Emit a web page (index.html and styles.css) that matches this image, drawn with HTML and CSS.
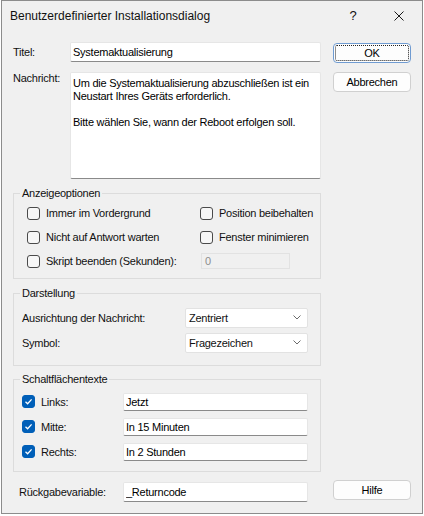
FILE: index.html
```html
<!DOCTYPE html>
<html lang="de">
<head>
    <meta charset="UTF-8">
    <title>Benutzerdefinierter Installationsdialog</title>
    <link rel="stylesheet" href="styles.css">
</head>
<body>

<div class="window">
    <div class="titlebar">
        <span class="title">Benutzerdefinierter Installationsdialog</span>
        <div class="caption-buttons">
            <span class="caption-btn">?</span>
            <span class="caption-btn">
                <svg width="10" height="10" viewBox="0 0 10 10">
                    <path d="M0.5 0.5 L9.5 9.5 M9.5 0.5 L0.5 9.5" stroke="#1a1a1a" stroke-width="1" fill="none"/>
                </svg>
            </span>
        </div>
    </div>

    <div class="dialog-body">
        <div class="main">
            <div class="field-row">
                <label class="field-label" for="titel">Titel:</label>
                <input class="textbox" id="titel" type="text" value="Systemaktualisierung">
            </div>

            <div class="field-row message-row">
                <label class="field-label" for="nachricht">Nachricht:</label>
                <textarea class="textbox message" id="nachricht" wrap="off">Um die Systemaktualisierung abzuschließen ist ein
Neustart Ihres Geräts erforderlich.

Bitte wählen Sie, wann der Reboot erfolgen soll.</textarea>
            </div>

            <fieldset class="group">
                <legend>Anzeigeoptionen</legend>
                <div class="options">
                    <label class="check"><span class="box"></span>Immer im Vordergrund</label>
                    <label class="check"><span class="box"></span>Position beibehalten</label>
                    <label class="check"><span class="box"></span>Nicht auf Antwort warten</label>
                    <label class="check"><span class="box"></span>Fenster minimieren</label>
                    <label class="check"><span class="box"></span>Skript beenden (Sekunden):</label>
                    <div class="spinbox">0</div>
                </div>
            </fieldset>

            <fieldset class="group appearance">
                <legend>Darstellung</legend>
                <div class="appearance-grid">
                    <span>Ausrichtung der Nachricht:</span>
                    <div class="combo">
                        <span>Zentriert</span>
                        <svg width="8" height="5" viewBox="0 0 8 5"><path d="M0.5 0.5 L4 4 L7.5 0.5" stroke="#6b6b6b" fill="none"/></svg>
                    </div>
                    <span>Symbol:</span>
                    <div class="combo">
                        <span>Fragezeichen</span>
                        <svg width="8" height="5" viewBox="0 0 8 5"><path d="M0.5 0.5 L4 4 L7.5 0.5" stroke="#6b6b6b" fill="none"/></svg>
                    </div>
                </div>
            </fieldset>

            <fieldset class="group captions">
                <legend>Schaltflächentexte</legend>
                <div class="captions-grid">
                    <label class="check"><span class="box checked"><svg width="11" height="11" viewBox="0 0 11 11"><path d="M2.5 5.8 L4.6 7.8 L8.6 3.4" stroke="#fff" stroke-width="1.3" fill="none"/></svg></span>Links:</label>
                    <input class="textbox" type="text" value="Jetzt">
                    <label class="check"><span class="box checked"><svg width="11" height="11" viewBox="0 0 11 11"><path d="M2.5 5.8 L4.6 7.8 L8.6 3.4" stroke="#fff" stroke-width="1.3" fill="none"/></svg></span>Mitte:</label>
                    <input class="textbox" type="text" value="In 15 Minuten">
                    <label class="check"><span class="box checked"><svg width="11" height="11" viewBox="0 0 11 11"><path d="M2.5 5.8 L4.6 7.8 L8.6 3.4" stroke="#fff" stroke-width="1.3" fill="none"/></svg></span>Rechts:</label>
                    <input class="textbox" type="text" value="In 2 Stunden">
                </div>
            </fieldset>
        </div>

        <div class="side">
            <button class="btn default">OK</button>
            <button class="btn">Abbrechen</button>
        </div>
    </div>

    <div class="footer">
        <label class="footer-label" for="rueckgabe">Rückgabevariable:</label>
        <input class="textbox" id="rueckgabe" type="text" value="_Returncode">
        <button class="btn help">Hilfe</button>
    </div>
</div>

</body>
</html>
```

FILE: styles.css
```css
* {
    box-sizing: border-box;
}

body {
    margin: 0;
    background-color: #fff;
    font-family: "Liberation Sans", Arial, sans-serif;
    font-size: 11px;
    letter-spacing: -0.25px;
    color: #111;
}

.window {
    width: 422px;
    height: 514px;
    margin-left: 1px;
    border: 1px solid #8c8c8c;
    background-color: #f0f0f0;
    display: flex;
    flex-direction: column;
}

/* Titelleiste */
.titlebar {
    height: 29px;
    display: flex;
    align-items: center;
    justify-content: space-between;
    padding-left: 8px;
}

.title {
    font-size: 12px;
    letter-spacing: 0;
}

.caption-buttons {
    display: flex;
    height: 100%;
}

.caption-btn {
    width: 46px;
    display: flex;
    align-items: center;
    justify-content: center;
    font-size: 13px;
}

/* Inhalt */
.dialog-body {
    display: grid;
    grid-template-columns: 308px 78px;
    column-gap: 12px;
    padding: 12px 0 0 11px;
}

.main {
    display: flex;
    flex-direction: column;
}

.field-row {
    display: flex;
    align-items: center;
}

.message-row {
    align-items: flex-start;
    margin-top: 10px;
    line-height: 13px;
}

.field-label {
    width: 57px;
}

.textbox {
    font: inherit;
    letter-spacing: inherit;
    color: #000;
    height: 20px;
    padding: 0 2px;
    border: 1px solid #e6e6e6;
    border-bottom-color: #8a8a8a;
    border-radius: 2px;
    background-color: #fff;
    outline: none;
}

.field-row .textbox {
    flex: 1;
}

.message {
    height: 107px;
    padding: 4px 2px;
    line-height: 13px;
    resize: none;
    overflow: hidden;
}

/* Gruppenrahmen */
.group {
    margin: 7px 0 0;
    padding: 1px 6px 5px;
    border: 1px solid #dcdcdc;
    min-width: 0;
}

.group legend {
    padding: 0 2px;
    line-height: 14px;
}

.options {
    display: grid;
    grid-template-columns: 173px 1fr;
    grid-auto-rows: 24px;
    align-items: center;
    padding-left: 7px;
}

.check {
    display: flex;
    align-items: center;
    gap: 6px;
}

.box {
    width: 13px;
    height: 13px;
    border: 1px solid #4a4a4a;
    border-radius: 3px;
    background-color: #f7f7f7;
    display: flex;
    align-items: center;
    justify-content: center;
}

.box.checked {
    background-color: #005fb8;
    border-color: #005fb8;
}

.spinbox {
    width: 89px;
    height: 16px;
    margin-left: 1px;
    padding-left: 3px;
    border: 1px solid #e2e2e2;
    color: #8d8d8d;
    line-height: 14px;
}

.appearance {
    padding-top: 5px;
    padding-bottom: 10px;
}

.appearance-grid {
    display: grid;
    grid-template-columns: 163px 123px;
    grid-auto-rows: 25px;
    align-items: center;
    padding-left: 2px;
}

.combo {
    height: 20px;
    display: flex;
    align-items: center;
    justify-content: space-between;
    padding: 0 6px 0 3px;
    background-color: #fff;
    border: 1px solid #e2e2e2;
    border-radius: 2px;
}

.captions {
    margin-top: 6px;
    padding-top: 3px;
    padding-bottom: 7px;
}

.captions-grid {
    display: grid;
    grid-template-columns: 101px 185px;
    grid-auto-rows: 25px;
    align-items: center;
    padding-left: 2px;
}

.captions-grid .textbox {
    height: 18px;
}

/* Schaltflächen */
.side {
    display: flex;
    flex-direction: column;
    gap: 9px;
    padding-top: 1px;
}

.btn {
    font: inherit;
    letter-spacing: inherit;
    color: #000;
    width: 78px;
    height: 20px;
    padding: 0;
    background-color: #fdfdfd;
    border: 1px solid #d0d0d0;
    border-radius: 4px;
    position: relative;
}

.btn.default {
    border-color: #6f9bd1;
}

.btn.default::after {
    content: "";
    position: absolute;
    inset: 1px;
    border: 1px dotted #222;
    border-radius: 2px;
}

.footer {
    display: flex;
    align-items: center;
    margin-top: 10px;
    padding-left: 17px;
}

.footer-label {
    width: 104px;
}

.footer .textbox {
    width: 185px;
}

.btn.help {
    margin-left: 25px;
    align-self: flex-start;
    margin-top: -2px;
}
```
